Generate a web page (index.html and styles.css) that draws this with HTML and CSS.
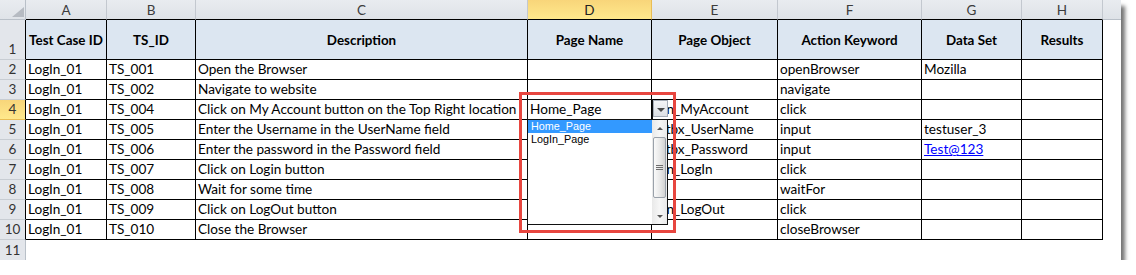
FILE: index.html
```html
<!DOCTYPE html>
<html>
<head>
<meta charset="utf-8">
<link rel="stylesheet" href="styles.css">
</head>
<body>
<div class="sheet">
  <div class="grid">
    <div class="corner"><span class="tri"></span></div>
    <div class="ch">A</div><div class="ch">B</div><div class="ch">C</div><div class="ch active">D</div><div class="ch">E</div><div class="ch">F</div><div class="ch">G</div><div class="ch">H</div><div class="ch edge"></div>

    <div class="rh">1</div>
    <div class="hd">Test Case ID</div><div class="hd">TS_ID</div><div class="hd">Description</div><div class="hd">Page Name</div><div class="hd">Page Object</div><div class="hd">Action Keyword</div><div class="hd">Data Set</div><div class="hd">Results</div><div class="b"></div>

    <div class="rh">2</div>
    <div class="c">LogIn_01</div><div class="c">TS_001</div><div class="c">Open the Browser</div><div class="c"></div><div class="c"></div><div class="c">openBrowser</div><div class="c">Mozilla</div><div class="c"></div><div class="b"></div>

    <div class="rh">3</div>
    <div class="c">LogIn_01</div><div class="c">TS_002</div><div class="c">Navigate to website</div><div class="c"></div><div class="c"></div><div class="c">navigate</div><div class="c"></div><div class="c"></div><div class="b"></div>

    <div class="rh active">4</div>
    <div class="c">LogIn_01</div><div class="c">TS_004</div><div class="c">Click on My Account button on the Top Right location</div><div class="c">Home_Page</div><div class="c">btn_MyAccount</div><div class="c">click</div><div class="c"></div><div class="c"></div><div class="b"></div>

    <div class="rh">5</div>
    <div class="c">LogIn_01</div><div class="c">TS_005</div><div class="c">Enter the Username in the UserName field</div><div class="c"></div><div class="c">txtbx_UserName</div><div class="c">input</div><div class="c">testuser_3</div><div class="c"></div><div class="b"></div>

    <div class="rh">6</div>
    <div class="c">LogIn_01</div><div class="c">TS_006</div><div class="c">Enter the password in the Password field</div><div class="c"></div><div class="c">txtbx_Password</div><div class="c">input</div><div class="c"><a class="link">Test@123</a></div><div class="c"></div><div class="b"></div>

    <div class="rh">7</div>
    <div class="c">LogIn_01</div><div class="c">TS_007</div><div class="c">Click on Login button</div><div class="c"></div><div class="c">btn_LogIn</div><div class="c">click</div><div class="c"></div><div class="c"></div><div class="b"></div>

    <div class="rh">8</div>
    <div class="c">LogIn_01</div><div class="c">TS_008</div><div class="c">Wait for some time</div><div class="c"></div><div class="c"></div><div class="c">waitFor</div><div class="c"></div><div class="c"></div><div class="b"></div>

    <div class="rh">9</div>
    <div class="c">LogIn_01</div><div class="c">TS_009</div><div class="c">Click on LogOut button</div><div class="c"></div><div class="c">btn_LogOut</div><div class="c">click</div><div class="c"></div><div class="c"></div><div class="b"></div>

    <div class="rh">10</div>
    <div class="c">LogIn_01</div><div class="c">TS_010</div><div class="c">Close the Browser</div><div class="c"></div><div class="c"></div><div class="c">closeBrowser</div><div class="c"></div><div class="c"></div><div class="b"></div>

    <div class="rh last">11</div>
    <div class="b"></div><div class="b"></div><div class="b"></div><div class="b"></div><div class="b"></div><div class="b"></div><div class="b"></div><div class="b"></div><div class="b"></div>
  </div>

  <div class="active-cell"></div>
  <div class="dd-button"><span class="arrow-down"></span></div>
  <div class="dd-list">
    <div class="items">
      <div class="item selected">Home_Page</div>
      <div class="item">LogIn_Page</div>
    </div>
    <div class="scrollbar">
      <div class="sb-btn"><span class="arrow-up"></span></div>
      <div class="track"><div class="thumb"><span class="grip"></span><span class="grip"></span><span class="grip"></span></div></div>
      <div class="sb-btn"><span class="arrow-down small"></span></div>
    </div>
  </div>
  <div class="highlight"></div>
</div>
</body>
</html>
```

FILE: styles.css
```css
* { box-sizing: border-box; }
html, body { margin: 0; padding: 0; background: #fff; }
body { font-family: "Lato", "Liberation Sans", sans-serif; color: #000; }

.sheet {
  position: relative;
  width: 1121px;
  height: 260px;
  background: #fff;
  box-shadow: 5px 5px 4px -1px rgba(0,0,0,0.55);
}

.grid {
  display: grid;
  grid-template-columns: 26px 81px 89px 332px 124px 126px 144px 100px 81px 18px;
  grid-template-rows: 20px 40px repeat(10, 20px);
}

.corner {
  background: linear-gradient(#e9ecf0, #dfe3e8);
  border-right: 1px solid #b9c0c8;
  border-bottom: 1px solid #b9c0c8;
  display: flex;
  align-items: flex-end;
  justify-content: flex-end;
  padding: 0 1px 2px 0;
}
.tri {
  width: 12px;
  height: 10px;
  background: #b6bbc2;
  clip-path: polygon(100% 0, 100% 100%, 0 100%);
}

.ch {
  background: linear-gradient(#e9ecf0, #dee2e7);
  border-right: 1px solid #c3c8cf;
  border-bottom: 1px solid #000;
  display: flex;
  align-items: center;
  justify-content: center;
  font-size: 13.5px;
  color: #3c3c3c;
  padding-top: 1px;
}
.ch.active {
  background: linear-gradient(#f8d57a, #ffe98c);
  border-right-color: #e9bd55;
  color: #222;
}
.ch.edge { border-right: none; border-bottom-color: #b9c0c8; }

.rh {
  background: #e3e6eb;
  border-right: 1px solid #000;
  border-bottom: 1px solid #c8cdd3;
  display: flex;
  align-items: flex-end;
  justify-content: center;
  font-size: 13.5px;
  line-height: 19px;
  color: #333;
}
.rh.active { background: linear-gradient(#f8d57a, #ffe98c); border-bottom-color: #e9bd55; }
.rh.last { border-right-color: #b9c0c8; border-bottom: none; }

.hd {
  background: #dce6f1;
  border-right: 1px solid #000;
  border-bottom: 1px solid #000;
  display: flex;
  align-items: center;
  justify-content: center;
  font-weight: 700;
  font-size: 13.4px;
  white-space: nowrap;
}

.c {
  border-right: 1px solid #000;
  border-bottom: 1px solid #000;
  display: flex;
  align-items: flex-end;
  padding-left: 2px;
  font-size: 13.6px;
  line-height: 19px;
  white-space: nowrap;
  overflow: hidden;
}

.b { background: #fff; }

.link { color: #0000ff; text-decoration: underline; }

/* overlays: data validation dropdown */
.active-cell {
  position: absolute;
  left: 527px;
  top: 99px;
  width: 126px;
  height: 21px;
  border: 1px solid #111;
}
.dd-button {
  position: absolute;
  left: 653px;
  top: 100px;
  width: 15px;
  height: 17px;
  border: 1px solid #a7aeb8;
  background: linear-gradient(#f4f5f7, #dcdfe4);
  display: flex;
  align-items: center;
  justify-content: center;
}
.arrow-down {
  width: 0; height: 0;
  border-left: 4px solid transparent;
  border-right: 4px solid transparent;
  border-top: 4px solid #4a4a4a;
  margin-top: 2px;
}
.arrow-down.small { border-left-width: 3.5px; border-right-width: 3.5px; border-top-width: 3px; border-top-color: #555; margin-top: 0; }
.arrow-up {
  width: 0; height: 0;
  border-left: 3.5px solid transparent;
  border-right: 3.5px solid transparent;
  border-bottom: 3px solid #555;
}

.dd-list {
  position: absolute;
  left: 527px;
  top: 119px;
  width: 141px;
  height: 106px;
  border: 1px solid #111;
  background: #fff;
  display: flex;
}
.items { width: 124px; font-family: "Liberation Sans", sans-serif; font-size: 10.8px; }
.item { height: 13px; line-height: 13px; padding-left: 3px; color: #000; }
.item.selected { background: #3399ff; color: #fff; }

.scrollbar {
  width: 15px;
  display: flex;
  flex-direction: column;
  background: linear-gradient(90deg, #e9e9e9, #f6f6f6 50%, #e9e9e9);
}
.sb-btn {
  height: 16px;
  display: flex;
  align-items: center;
  justify-content: center;
}
.track { flex: 1; padding: 1px 1px 0 1px; }
.thumb {
  height: 61px;
  border: 1px solid #9aa1aa;
  border-radius: 2px;
  background: linear-gradient(90deg, #fafafa, #e6e6e6 60%, #d2d2d2);
  display: flex;
  flex-direction: column;
  align-items: center;
  justify-content: center;
  gap: 1px;
}
.grip { width: 7px; height: 1px; background: #6d6d6d; }

.highlight {
  position: absolute;
  left: 519px;
  top: 92px;
  width: 157px;
  height: 141px;
  border: 3px solid #e7463f;
}
```
